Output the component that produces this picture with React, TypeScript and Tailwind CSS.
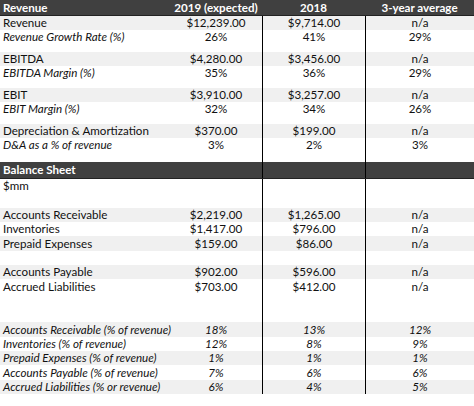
import React from "react";

type Row =
  | { kind: "head"; cells: string[]; h: string }
  | { kind: "blank"; h: string }
  | { kind: "data"; cells: string[]; h: string; shade?: boolean; italic?: boolean; italicValues?: boolean };

const T = "h-[14px]";
const B = "h-[14.33px]";

const rows: Row[] = [
  { kind: "head", cells: ["Revenue", "2019 (expected)", "2018", "3-year average"], h: "h-[16px]" },
  { kind: "data", cells: ["Revenue", "$12,239.00", "$9,714.00", "n/a"], h: T, shade: true },
  { kind: "data", cells: ["Revenue Growth Rate (%)", "26%", "41%", "29%"], h: T, italic: true },
  { kind: "blank", h: "h-[8px]" },
  { kind: "data", cells: ["EBITDA", "$4,280.00", "$3,456.00", "n/a"], h: T, shade: true },
  { kind: "data", cells: ["EBITDA Margin (%)", "35%", "36%", "29%"], h: T, italic: true },
  { kind: "blank", h: "h-[8px]" },
  { kind: "data", cells: ["EBIT", "$3,910.00", "$3,257.00", "n/a"], h: T, shade: true },
  { kind: "data", cells: ["EBIT Margin (%)", "32%", "34%", "26%"], h: T, italic: true },
  { kind: "blank", h: "h-[8px]" },
  { kind: "data", cells: ["Depreciation & Amortization", "$370.00", "$199.00", "n/a"], h: T, shade: true },
  { kind: "data", cells: ["D&A as a % of revenue", "3%", "2%", "3%"], h: T, italic: true },
  { kind: "blank", h: "h-[10px]" },
  { kind: "head", cells: ["Balance Sheet", "", "", ""], h: "h-[17px]" },
  { kind: "data", cells: ["$mm", "", "", ""], h: B },
  { kind: "blank", h: B },
  { kind: "data", cells: ["Accounts Receivable", "$2,219.00", "$1,265.00", "n/a"], h: B, shade: true },
  { kind: "data", cells: ["Inventories", "$1,417.00", "$796.00", "n/a"], h: B },
  { kind: "data", cells: ["Prepaid Expenses", "$159.00", "$86.00", "n/a"], h: B, shade: true },
  { kind: "blank", h: B },
  { kind: "data", cells: ["Accounts Payable", "$902.00", "$596.00", "n/a"], h: B, shade: true },
  { kind: "data", cells: ["Accrued Liabilities", "$703.00", "$412.00", "n/a"], h: B },
  { kind: "blank", h: B },
  { kind: "blank", h: B },
  { kind: "data", cells: ["Accounts Receivable (% of revenue)", "18%", "13%", "12%"], h: B, shade: true, italic: true, italicValues: true },
  { kind: "data", cells: ["Inventories (% of revenue)", "12%", "8%", "9%"], h: B, italic: true, italicValues: true },
  { kind: "data", cells: ["Prepaid Expenses (% of revenue)", "1%", "1%", "1%"], h: B, shade: true, italic: true, italicValues: true },
  { kind: "data", cells: ["Accounts Payable (% of revenue)", "7%", "6%", "6%"], h: B, italic: true, italicValues: true },
  { kind: "data", cells: ["Accrued Liabilities (% or revenue)", "6%", "4%", "5%"], h: B, shade: true, italic: true, italicValues: true },
];

function SheetRow({ row, first }: { row: Row; first: boolean }) {
  if (row.kind === "blank") {
    return (
      <div className={`flex ${row.h}`}>
        <div className="w-[262px]" />
        <div className="w-[103px] border-l border-black" />
        <div className="flex-1 border-l border-black" />
      </div>
    );
  }
  if (row.kind === "head") {
    return (
      <div className={`flex ${row.h} bg-[#404040] border-b border-[#222] text-white font-bold items-center leading-none`}>
        <div className="w-[170px] pl-[3px]">{row.cells[0]}</div>
        <div className="w-[92px] text-center">{row.cells[1]}</div>
        <div className={`w-[103px] h-full flex items-center justify-center ${first ? "" : "border-l border-black"}`}>{row.cells[2]}</div>
        <div className={`flex-1 h-full flex items-center justify-center ${first ? "" : "border-l border-black"}`}>{row.cells[3]}</div>
      </div>
    );
  }
  const bg = row.shade ? "bg-[#f0f0f0]" : "";
  const v = row.italicValues ? "italic" : "";
  return (
    <div className={`flex ${row.h} ${bg} items-center leading-none text-[#111]`}>
      <div className={`w-[170px] pl-[3px] whitespace-nowrap ${row.italic ? "italic" : ""}`}>{row.cells[0]}</div>
      <div className={`w-[92px] text-center ${v}`}>{row.cells[1]}</div>
      <div className={`w-[103px] h-full flex items-center justify-center border-l border-black ${v}`}>{row.cells[2]}</div>
      <div className={`flex-1 h-full flex items-center justify-center border-l border-black ${v}`}>{row.cells[3]}</div>
    </div>
  );
}

export default function App() {
  return (
    <div className="w-[474px] h-[406px] bg-white overflow-hidden text-[11.6px] font-['Lato',sans-serif]">
      {rows.map((r, i) => (
        <SheetRow key={i} row={r} first={i === 0} />
      ))}
    </div>
  );
}
